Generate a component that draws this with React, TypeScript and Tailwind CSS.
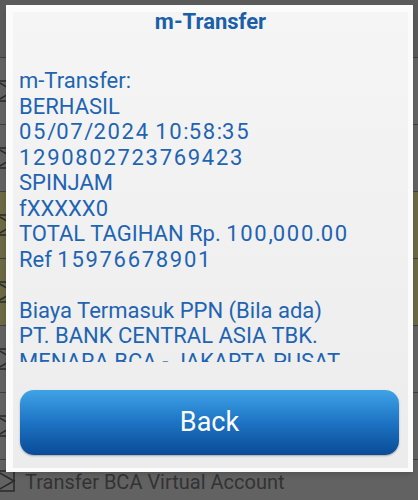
import React from "react";

const lines = [
  "m-Transfer:",
  "BERHASIL",
  "05/07/2024 10:58:35",
  "1290802723769423",
  "SPINJAM",
  "fXXXXX0",
  "TOTAL TAGIHAN Rp. 100,000.00",
  "Ref 15976678901",
  "",
  "Biaya Termasuk PPN (Bila ada)",
  "PT. BANK CENTRAL ASIA TBK.",
  "MENARA BCA - JAKARTA PUSAT",
  "",
];

// the phone font has wider figures than Roboto, so digit runs get a little tracking
const Line: React.FC<{ text: string }> = ({ text }) => {
  const parts = text.split(/(\d+)/);
  return (
    <>
      {parts.map((p, i) =>
        /^\d+$/.test(p) ? (
          <span key={i} className="tracking-[1.7px]">
            {p}
          </span>
        ) : (
          <span key={i}>{p}</span>
        )
      )}
    </>
  );
};

const RowIcon: React.FC = () => (
  <svg width="16" height="22" viewBox="0 0 16 22" className="shrink-0">
    <rect x="-4" y="1" width="18" height="20" fill="none" stroke="#2a2a2a" strokeWidth="1.5" />
    <path d="M-4 1 L14 11 L-4 21" fill="none" stroke="#2a2a2a" strokeWidth="1.5" />
  </svg>
);

const App: React.FC = () => {
  const rows = [0, 1, 2, 3, 4, 5];

  return (
    <div
      className="relative w-[418px] h-[500px] overflow-hidden bg-[#616161]"
      style={{ fontFamily: "Roboto, 'Liberation Sans', sans-serif" }}
    >
      {/* page behind the dialog */}
      <div className="flex flex-col">
        <div className="h-[58px] border-b border-[#3f3f3f] bg-[#5a5a5a]" />
        {rows.map((r) => (
          <div
            key={r}
            className={`h-[67px] flex items-center border-b border-[#3f3f3f] ${
              r === 2 || r === 3 ? "bg-[#6b6a45]" : "bg-[#626262]"
            }`}
          >
            <RowIcon />
          </div>
        ))}
        <div className="flex items-start gap-[9px] pt-[10px] bg-[#626262] h-[60px]">
          <RowIcon />
          <div className="text-[20px] leading-[24px] text-[#333333]">
            Transfer BCA Virtual Account
            <div className="mt-[3px] text-[#3a3a3a]">Rp 100.000 - 12345</div>
          </div>
        </div>
      </div>

      {/* dialog */}
      <div className="absolute left-[6px] top-[5px] w-[407px] h-[467px] bg-[#fbfbfb] pl-[7px] pr-[5px] pt-[7px] pb-[4px] shadow-md">
        <div className="flex flex-col h-full bg-gradient-to-b from-[#f5f5f5] to-[#ececec]">
          <div className="h-[22px] mt-[-1px] flex items-center justify-center text-[22px] leading-[22px] font-bold text-[#1b5fa9]">
            m-Transfer
          </div>
          <div className="h-[329px] overflow-hidden pt-[35px] pl-[6px]">
            {lines.map((l, i) => (
              <div key={i} className="h-[25.5px] text-[22px] leading-[25.5px] text-[#1e64b3] whitespace-nowrap">
                <Line text={l} />
              </div>
            ))}
          </div>
          <div className="flex-1 flex items-end pl-[7px] pr-[9px] pb-[13px]">
            <button className="w-full h-[65px] rounded-[14px] bg-gradient-to-b from-[#3fa3e6] via-[#1d74c4] to-[#0a4b96] text-white text-[27px] shadow-[0_1px_2px_rgba(0,0,0,0.3)]">
              Back
            </button>
          </div>
        </div>
      </div>
    </div>
  );
};

export default App;
